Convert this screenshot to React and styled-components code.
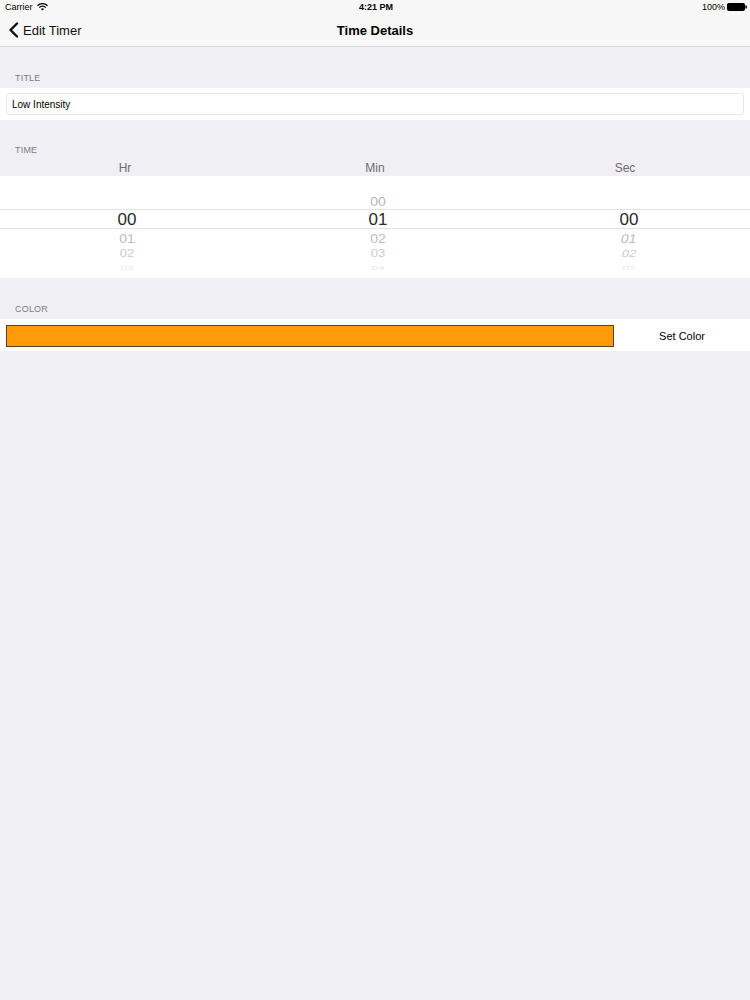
import React from 'react'
import styled, { createGlobalStyle } from 'styled-components'

const GlobalStyle = createGlobalStyle`
  html, body {
    margin: 0;
    padding: 0;
    background: #efeff4;
    font-family: "Liberation Sans", Arial, sans-serif;
    color: #000;
  }
`;

const Page = styled.div`
  width: 750px;
  min-height: 1000px;
  background: #efeff4;
`;

const TopBar = styled.div`
  background: #f7f7f8;
  border-bottom: 1px solid #d8d8dc;
  height: 46px;
`;

const StatusBar = styled.div`
  height: 14px;
  display: grid;
  grid-template-columns: 1fr auto 1fr;
  align-items: center;
  padding: 0 3px 0 5px;
  font-size: 9px;
`;

const StatusLeft = styled.div`
  display: flex;
  align-items: center;
  gap: 4px;
`;

const StatusRight = styled.div`
  display: flex;
  justify-content: flex-end;
  align-items: center;
  gap: 2px;
`;

const Clock = styled.div`
  font-weight: bold;
  font-size: 9px;
`;

const NavBar = styled.div`
  height: 32px;
  display: grid;
  grid-template-columns: 1fr auto 1fr;
  align-items: center;
  padding: 0 8px;
`;

const BackButton = styled.div`
  display: flex;
  align-items: center;
  gap: 4px;
  font-size: 13px;
  color: #111;
`;

const NavTitle = styled.div`
  font-size: 13px;
  font-weight: bold;
`;

const SectionHeader = styled.div`
  font-size: 9px;
  color: #7d7d82;
  letter-spacing: 0.2px;
  text-transform: uppercase;
  padding: 0 15px;
  height: ${(p) => p.h}px;
  display: flex;
  align-items: flex-end;
  padding-bottom: ${(p) => p.pb || 5}px;
  box-sizing: border-box;
`;

const Cell = styled.div`
  background: #fff;
  padding: ${(p) => p.pad || '0'};
  display: flex;
  align-items: center;
`;

const TextField = styled.div`
  flex: 1;
  height: 22px;
  border: 1px solid #e8e8ec;
  border-radius: 3px;
  box-sizing: border-box;
  display: flex;
  align-items: center;
  padding-left: 5px;
  font-size: 10px;
`;

const Columns = styled.div`
  display: grid;
  grid-template-columns: repeat(3, 1fr);
  text-align: center;
`;

const UnitRow = styled(Columns)`
  height: 16px;
  align-items: center;
  font-size: 12px;
  color: #6d6d72;
`;

const Picker = styled.div`
  background: #fff;
  height: 102px;
  padding-top: 16px;
  box-sizing: border-box;
`;

const PickerRow = styled(Columns)`
  height: ${(p) => p.h}px;
  align-items: center;
  font-size: ${(p) => p.size}px;
  color: ${(p) => p.color};
  border-top: ${(p) => (p.selected ? '1px solid #e4e4e8' : 'none')};
  border-bottom: ${(p) => (p.selected ? '1px solid #e4e4e8' : 'none')};
  box-sizing: border-box;
  overflow: visible;
`;

const Digit = styled.span`
  display: inline-block;
  transform: ${(p) => p.tf || 'none'};
  opacity: ${(p) => p.op ?? 1};
`;

const Swatch = styled.div`
  width: 608px;
  height: 22px;
  background: #fe9b06;
  border: 1px solid #5a4322;
  box-sizing: border-box;
`;

const SetColor = styled.div`
  flex: 1;
  text-align: center;
  font-size: 11px;
`;

const Wifi = () => (
  <svg width="11" height="8" viewBox="0 0 11 8">
    <path d="M0.5 2.8 A7 7 0 0 1 10.5 2.8" stroke="#000" strokeWidth="1.3" fill="none" />
    <path d="M2.3 4.6 A4.4 4.4 0 0 1 8.7 4.6" stroke="#000" strokeWidth="1.3" fill="none" />
    <path d="M5.5 7.6 L3.9 6.1 A2.3 2.3 0 0 1 7.1 6.1 Z" fill="#000" />
  </svg>
);

const Battery = () => (
  <svg width="20" height="8" viewBox="0 0 20 8">
    <rect x="0.5" y="0.5" width="17" height="7" rx="1" fill="#000" stroke="#000" />
    <rect x="18.3" y="2.5" width="1.5" height="3" fill="#000" />
  </svg>
);

const Chevron = () => (
  <svg width="11" height="16" viewBox="0 0 11 16">
    <path d="M9 1.5 L2.5 8 L9 14.5" stroke="#111" strokeWidth="2.4" fill="none" strokeLinecap="round" strokeLinejoin="round" />
  </svg>
);

const rows = [
  { h: 17, size: 14, color: '#b6b6bb', tf: 'scaleY(0.9)', vals: ['', '00', ''] },
  { h: 20, size: 17, color: '#2a2a2a', selected: true, vals: ['00', '01', '00'] },
  { h: 17, size: 14, color: '#b9b9be', tf: 'scaleY(0.9)', vals: ['01', '02', '01'], op: 0.95 },
  { h: 15, size: 13, color: '#c4c4c8', tf: 'scaleY(0.8)', vals: ['02', '03', '02'], op: 0.85 },
  { h: 14, size: 12, color: '#dcdcdf', tf: 'scaleY(0.5)', vals: ['03', '04', '03'], op: 0.6 },
];

const colShift = ['translateX(2px)', 'translateX(3px)', 'translateX(4px)'];
const skew = ['', '', ' skewX(-12deg)'];

const App = () => {
  return (
    <Page>
      <GlobalStyle />
      <TopBar>
        <StatusBar>
          <StatusLeft>
            <span>Carrier</span>
            <Wifi />
          </StatusLeft>
          <Clock>4:21 PM</Clock>
          <StatusRight>
            <span>100%</span>
            <Battery />
          </StatusRight>
        </StatusBar>
        <NavBar>
          <BackButton>
            <Chevron />
            <span>Edit Timer</span>
          </BackButton>
          <NavTitle>Time Details</NavTitle>
          <div />
        </NavBar>
      </TopBar>

      <SectionHeader h={41}>Title</SectionHeader>
      <Cell pad="5px 6px 5px 6px">
        <TextField>Low Intensity</TextField>
      </Cell>

      <SectionHeader h={40}>Time</SectionHeader>
      <UnitRow>
        <span>Hr</span>
        <span>Min</span>
        <span>Sec</span>
      </UnitRow>
      <Picker>
        {rows.map((r, i) => (
          <PickerRow key={i} h={r.h} size={r.size} color={r.color} selected={r.selected}>
            {r.vals.map((v, j) => (
              <span key={j}>
                <Digit
                  op={r.op}
                  tf={`${colShift[j]} ${r.tf || ''}${r.selected ? '' : skew[j]}`}
                >
                  {v}
                </Digit>
              </span>
            ))}
          </PickerRow>
        ))}
      </Picker>

      <SectionHeader h={41}>Color</SectionHeader>
      <Cell pad="6px 0 4px 6px">
        <Swatch />
        <SetColor>Set Color</SetColor>
      </Cell>
    </Page>
  );
};

export default App;
